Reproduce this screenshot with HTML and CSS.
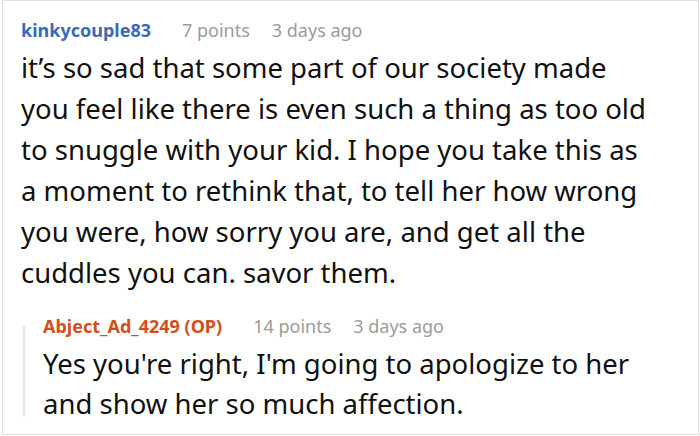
FILE: index.html
```html
<!DOCTYPE html>
<html>
<head>
<meta charset="utf-8">
<link rel="stylesheet" href="styles.css">
</head>
<body>
<div class="frame">
  <div class="comment">
    <div class="meta">
      <span class="author">kinkycouple83</span>
      <span class="points">7 points</span>
      <span class="time">3 days ago</span>
    </div>
    <p class="body">it’s so sad that some part of our society made<br>you feel like there is even such a thing as too old<br>to snuggle with your kid. I hope you take this as<br>a moment to rethink that, to tell her how wrong<br>you were, how sorry you are, and get all the<br>cuddles you can. savor them.</p>
    <div class="reply">
      <div class="meta">
        <span class="author op">Abject_Ad_4249 (OP)</span>
        <span class="points">14 points</span>
        <span class="time">3 days ago</span>
      </div>
      <p class="body">Yes you're right, I'm going to apologize to her<br>and show her so much affection.</p>
    </div>
  </div>
</div>
</body>
</html>
```
FILE: styles.css
```css
html, body {
  margin: 0;
  padding: 0;
  background: #fff;
}
body {
  font-family: "Noto Sans", "Open Sans", sans-serif;
  color: #111;
}
.frame {
  margin-left: 2px;
  width: 695px;
  height: 433px;
  border: 1px solid #e0e0e0;
  overflow: hidden;
}
.comment {
  display: flex;
  flex-direction: column;
  padding: 17px 0 0 18px;
}
.meta {
  display: flex;
  align-items: baseline;
  font-size: 18px;
  line-height: 24px;
  color: #9b9b9b;
}
.author {
  font-weight: bold;
  color: #3b6ab5;
  margin-right: 31px;
}
.author.op {
  color: #d24f1b;
}
.points {
  margin-right: 22px;
}
.body {
  margin: 5px 0 0 0;
  font-size: 27.5px;
  line-height: 41px;
  color: #111;
}
.reply {
  display: flex;
  flex-direction: column;
  margin: 33px 0 0 2px;
  border-left: 2px solid #e3e3e3;
  padding-left: 18px;
}
.reply .meta {
  margin-top: -12px;
}
.reply .body {
  margin-top: 6px;
  line-height: 40px;
  margin-bottom: -7px;
}
```
